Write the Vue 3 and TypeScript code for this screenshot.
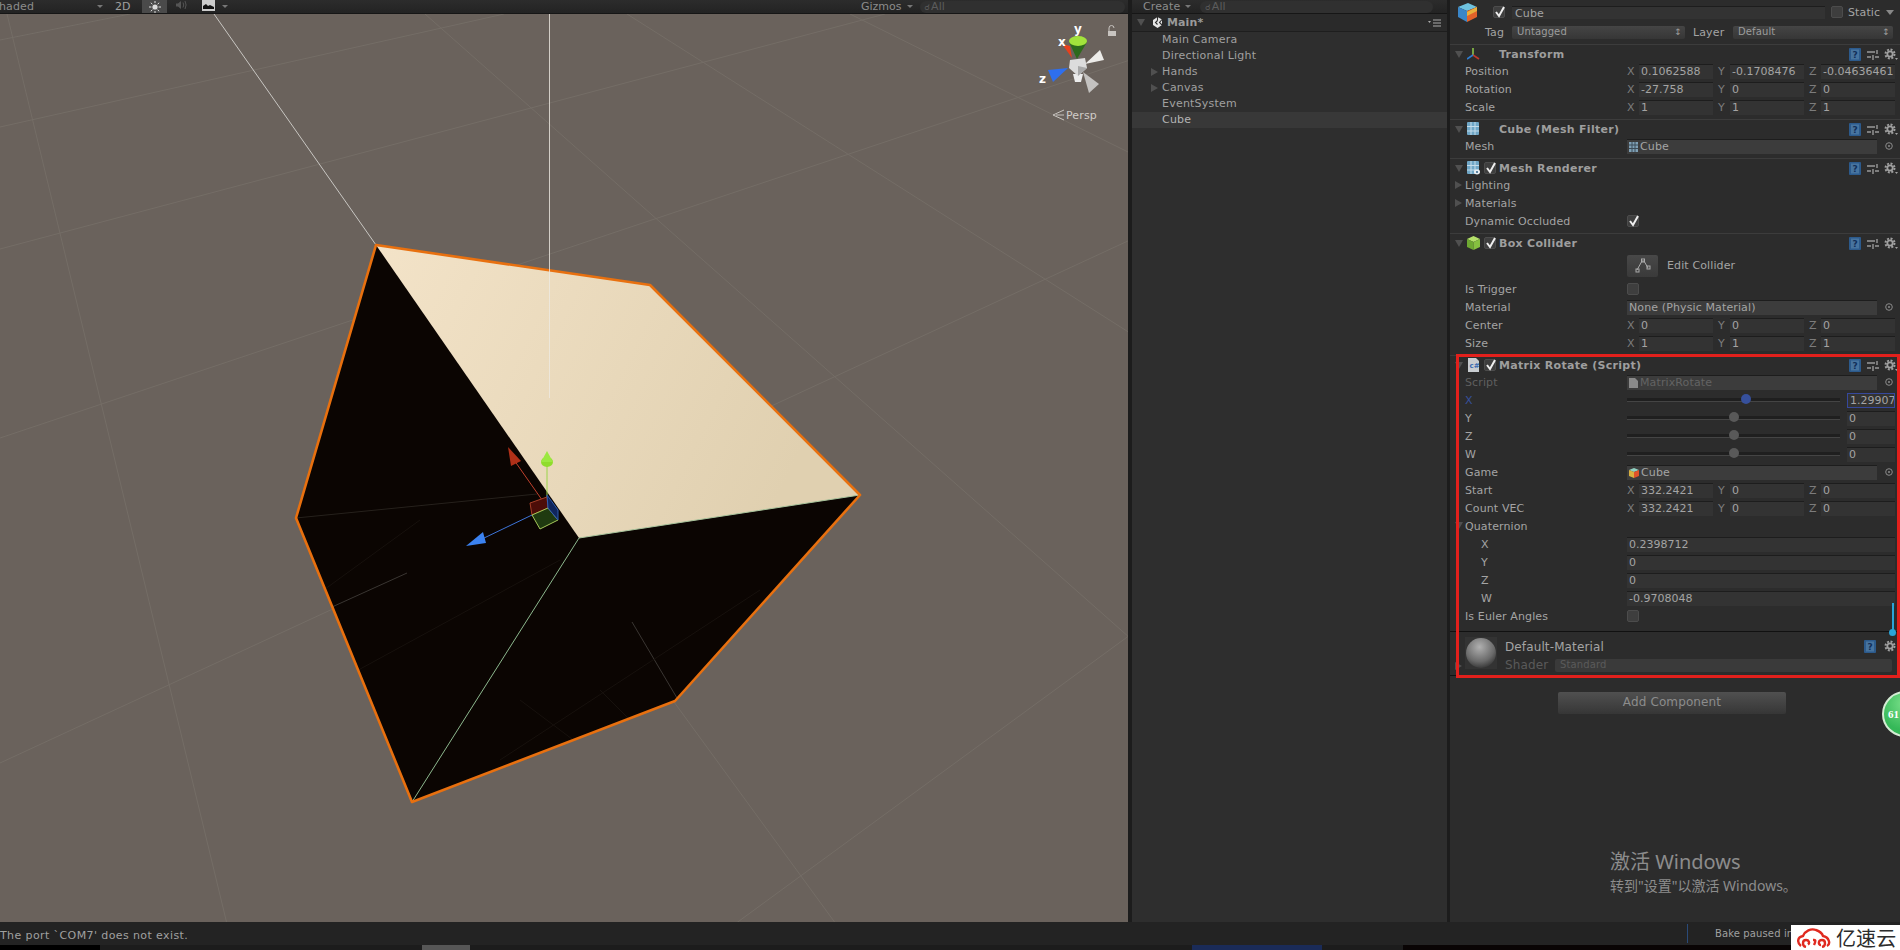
<script setup lang="ts">
type Row =
  | { kind: "vec"; label: string; vals: string[] }
  | { kind: "obj"; label: string; value: string; icon?: string; dim?: boolean }
  | { kind: "check"; label: string; checked?: boolean }
  | { kind: "fold"; label: string; open?: boolean }
  | { kind: "slider"; label: string; value: string; pos: number; active?: boolean }
  | { kind: "float"; label: string; value: string }
  | { kind: "button"; label: string };

type Section = { title: string; icon: string; check?: boolean; rows: Row[]; last?: boolean };

const sections: Section[] = [
  {
    title: "Transform",
    icon: "axes",
    rows: [
      { kind: "vec", label: "Position", vals: ["0.1062588", "-0.1708476", "-0.04636461"] },
      { kind: "vec", label: "Rotation", vals: ["-27.758", "0", "0"] },
      { kind: "vec", label: "Scale", vals: ["1", "1", "1"] },
    ],
  },
  {
    title: "Cube (Mesh Filter)",
    icon: "mesh",
    rows: [{ kind: "obj", label: "Mesh", value: "Cube", icon: "mesh" }],
  },
  {
    title: "Mesh Renderer",
    icon: "renderer",
    check: true,
    rows: [
      { kind: "fold", label: "Lighting" },
      { kind: "fold", label: "Materials" },
      { kind: "check", label: "Dynamic Occluded", checked: true },
    ],
  },
  {
    title: "Box Collider",
    icon: "box",
    check: true,
    rows: [
      { kind: "button", label: "Edit Collider" },
      { kind: "check", label: "Is Trigger" },
      { kind: "obj", label: "Material", value: "None (Physic Material)" },
      { kind: "vec", label: "Center", vals: ["0", "0", "0"] },
      { kind: "vec", label: "Size", vals: ["1", "1", "1"] },
    ],
  },
  {
    title: "Matrix Rotate (Script)",
    icon: "script",
    check: true,
    last: true,
    rows: [
      { kind: "obj", label: "Script", value: "MatrixRotate", icon: "script", dim: true },
      { kind: "slider", label: "X", value: "1.29907", pos: 56, active: true },
      { kind: "slider", label: "Y", value: "0", pos: 50 },
      { kind: "slider", label: "Z", value: "0", pos: 50 },
      { kind: "slider", label: "W", value: "0", pos: 50 },
      { kind: "obj", label: "Game", value: "Cube", icon: "cube" },
      { kind: "vec", label: "Start", vals: ["332.2421", "0", "0"] },
      { kind: "vec", label: "Count VEC", vals: ["332.2421", "0", "0"] },
      { kind: "fold", label: "Quaternion", open: true },
      { kind: "float", label: "X", value: "0.2398712" },
      { kind: "float", label: "Y", value: "0" },
      { kind: "float", label: "Z", value: "0" },
      { kind: "float", label: "W", value: "-0.9708048" },
      { kind: "check", label: "Is Euler Angles" },
    ],
  },
];

const axes = ["X", "Y", "Z"];

const hierarchy = [
  { name: "Main Camera" },
  { name: "Directional Light" },
  { name: "Hands", fold: true },
  { name: "Canvas", fold: true },
  { name: "EventSystem" },
  { name: "Cube", selected: true },
];

// faint floor grid of the scene view
const grid = [
  [0, 40, 130, 14],
  [0, 127, 504, 14],
  [0, 249, 885, 14],
  [0, 438, 1130, 60],
  [0, 763, 1130, 240],
  [735, 924, 1130, 635],
  [425, 14, 1130, 638],
  [627, 14, 1130, 333],
  [7, 14, 227, 924],
  [674, 702, 836, 924],
  [850, 14, 1130, 153],
];
</script>

<template>
  <div class="editor">
    <div class="main">
      <div class="scene-col">
        <div class="toolbar">
          <span class="shaded">haded</span>
          <span class="caret caret-shaded"></span>
          <span class="tool-2d">2D</span>
          <span class="tool-sun">
            <svg width="14" height="12" viewBox="0 0 14 12">
              <circle cx="7" cy="6" r="2.6" fill="#ddd" />
              <path d="M7 0v2M7 10v2M1 6h2.4M10.6 6H13M2.8 1.8l1.6 1.4M9.6 8.8l1.6 1.4M11.2 1.8L9.6 3.2M4.4 8.8l-1.6 1.4" stroke="#ddd" stroke-width="1" />
            </svg>
          </span>
          <span class="tool-audio">
            <svg width="12" height="12" viewBox="0 0 12 12">
              <path d="M1 4.5h2L6 2v8L3 7.5H1z" fill="#555" />
              <path d="M8 3.5q1.500 2.500 0 5M10 2q2.200 4 0 8" fill="none" stroke="#555" />
            </svg>
          </span>
          <span class="tool-image">
            <svg width="13" height="11" viewBox="0 0 13 11">
              <rect width="13" height="11" fill="#ccc" />
              <path d="M1 9V6l3-2 2 2 2-1 4 2v2z" fill="#111" />
            </svg>
          </span>
          <span class="caret caret-image"></span>
          <span class="gizmos">Gizmos</span>
          <span class="caret caret-gizmos"></span>
          <span class="search search-scene"><span class="search-mark">&#9740;</span>All</span>
        </div>
        <div class="scene">
          <svg class="scene-svg" viewBox="0 14 1128 908" width="1128" height="908">
            <defs>
              <linearGradient id="topFace" x1="0" y1="0" x2="1" y2="0.3">
                <stop offset="0" stop-color="#f3e3c8" />
                <stop offset="1" stop-color="#e0d0b0" />
              </linearGradient>
              <clipPath id="cubeClip">
                <polygon points="376,245 650,285 860,495 675,701 412,802 296,518" />
              </clipPath>
            </defs>
            <line v-for="(g, i) in grid" :key="i" :x1="g[0]" :y1="g[1]" :x2="g[2]" :y2="g[3]" stroke="#746d66" stroke-width="1" />

            <line x1="214" y1="14" x2="376" y2="245" stroke="#c8c6c2" stroke-width="1" />

            <!-- the selected cube -->
            <polygon points="376,245 650,285 860,495 675,701 412,802 296,518" fill="#0b0502" />
            <polygon points="376,245 650,285 860,495 579,538" fill="url(#topFace)" />
            <g clip-path="url(#cubeClip)">
              <path d="M296,518 L537,494" stroke="#26211c" stroke-width="1" fill="none" />
              <path d="M332,607 L407,573 M632,622 L677,698" stroke="#3a3632" stroke-width="1" fill="none" />
              <path d="M310,600 L420,520 M340,680 L560,560 M500,760 L760,590 M520,700 L600,760 M600,690 L660,750" stroke="#17110d" stroke-width="1" fill="none" />
            </g>
            <line x1="579" y1="538" x2="412" y2="802" stroke="#8db88e" stroke-width="1" />
            <line x1="579" y1="538" x2="860" y2="495" stroke="#a8c49c" stroke-width="1" />
            <polygon points="376,245 650,285 860,495 675,701 412,802 296,518" fill="none" stroke="#e8700f" stroke-width="2.600" stroke-linejoin="round" />

            <line x1="549.5" y1="14" x2="549.5" y2="398" stroke="#eeeae2" stroke-width="1" opacity="0.8" />

            <!-- move gizmo -->
            <line x1="547" y1="507" x2="514" y2="460" stroke="#c0402c" stroke-width="1" />
            <line x1="547" y1="497" x2="547" y2="465" stroke="#9ad44a" stroke-width="1" />
            <line x1="532" y1="515" x2="482" y2="539" stroke="#3d74d8" stroke-width="1" />
            <polygon points="508,447 521,461 511,466" fill="#b03018" />
            <ellipse cx="547" cy="462" rx="6" ry="5" fill="#8fdc2c" />
            <polygon points="547,451 541,462 553,462" fill="#9ce840" />
            <polygon points="466,546 483,532 486,543" fill="#3b82f0" />
            <polygon points="530,503 547,497 548,508 532,515" fill="#4c0d08" stroke="#a84028" stroke-width="1" />
            <polygon points="532,515 548,508 558,520 540,529" fill="#1f3a10" stroke="#a6c85a" stroke-width="1" />
            <polygon points="547,495 558,510 558,520 548,508" fill="#10265c" stroke="#2d5cb0" stroke-width="1" />

            <!-- orientation gizmo, top right -->
            <polygon points="1085,64 1100,50 1104,60" fill="#ecebe8" />
            <polygon points="1083,72 1099,84 1089,93" fill="#c4c2c0" />
            <polygon points="1073,74 1083,74 1081,82 1075,82" fill="#ececec" />
            <polygon points="1070,60 1085,58 1087,68 1078,76 1069,68" fill="#dcdcdc" />
            <polygon points="1078,66 1087,68 1078,76" fill="#a8a8a8" />
            <polygon points="1072,58 1062,44 1070,46" fill="#e8401c" />
            <polygon points="1077,59 1069,42 1087,42" fill="#2d6a1c" />
            <ellipse cx="1078" cy="41" rx="9" ry="5" fill="#a2e33c" />
            <polygon points="1068,68 1048,70 1053,82" fill="#2e6fee" />
            <text x="1074" y="33" class="giz">y</text>
            <text x="1058" y="46" class="giz">x</text>
            <text x="1039" y="83" class="giz">z</text>
            <path d="M1109,31 v-3 a2.500,2.500 0 0 1 5,0" fill="none" stroke="#c8c4c0" stroke-width="1" />
            <rect x="1108" y="31" width="8" height="5" fill="#c8c4c0" />
            <path d="M1064,110 L1053,115 L1064,120 M1064,115 L1056,115" fill="none" stroke="#c8c4c0" stroke-width="1" />
            <text x="1066" y="119" class="persp">Persp</text>
          </svg>
        </div>
      </div>

      <div class="hier">
        <div class="toolbar toolbar-hier">
          <span class="create">Create</span>
          <span class="caret caret-create"></span>
          <span class="search search-hier"><span class="search-mark">&#9740;</span>All</span>
        </div>
        <div class="hier-head">
          <span class="tri tri-open tri-head"></span>
          <svg class="unity-logo" width="11" height="11" viewBox="0 0 11 11">
            <path d="M5.500 0L10 2.500v5.500L5.500 11 1 8V3z" fill="#e6e6e6" />
            <path d="M5.500 3.500L3.500 5.500l2 2M5.500 0v3.500M10 8L7.500 5.500 10 2.500" stroke="#2e2e2e" stroke-width="1.100" fill="none" />
          </svg>
          <span class="hier-title">Main*</span>
          <svg class="hier-menu" width="14" height="8" viewBox="0 0 14 8">
            <path d="M0 2h3L1.500 4z" fill="#aaa" />
            <path d="M5 1h8M5 4h8M5 7h8" stroke="#aaa" />
          </svg>
        </div>
        <div v-for="item in hierarchy" :key="item.name" class="hier-row" :class="{ selected: item.selected }">
          <span v-if="item.fold" class="tri tri-closed tri-hier"></span>
          {{ item.name }}
        </div>
      </div>

      <div class="insp">
        <div class="go-head">
          <div class="go-row">
            <svg class="go-icon" width="21" height="21" viewBox="0 0 21 21">
              <polygon points="1,5 11,1 20,5 10,9" fill="#6fc3df" />
              <polygon points="1,5 10,9 10,20 1,15" fill="#3a86c8" />
              <polygon points="10,9 20,5 20,15 10,20" fill="#e2622a" />
              <polygon points="10,10 20,5 20,9 10,14" fill="#e8b03c" />
            </svg>
            <span class="check go-check"><svg width="12" height="12" viewBox="0 0 12 12"><path d="M2 6l3 4 5-9" fill="none" stroke="#eee" stroke-width="2" /></svg></span>
            <span class="go-name">Cube</span>
            <span class="check static-check"></span>
            <span class="static-label">Static</span>
            <span class="static-arrow"></span>
          </div>
          <div class="go-row go-row2">
            <span class="tag-label">Tag</span>
            <span class="select tag-select">Untagged<span class="updown">&#8597;</span></span>
            <span class="layer-label">Layer</span>
            <span class="select layer-select">Default<span class="updown">&#8597;</span></span>
          </div>
        </div>

        <div v-for="sec in sections" :key="sec.title" class="sec" :class="{ last: sec.last }">
          <div class="sec-head">
            <span class="tri tri-open tri-sec"></span>
            <svg v-if="sec.icon === 'axes'" class="sec-icon" width="13" height="14" viewBox="0 0 13 14">
              <path d="M6 8V1" stroke="#8bc34a" stroke-width="1.600" />
              <path d="M6 8l6 4" stroke="#c0392b" stroke-width="1.600" />
              <path d="M6 8l-6 4" stroke="#2e7dd1" stroke-width="1.600" />
            </svg>
            <svg v-else-if="sec.icon === 'mesh' || sec.icon === 'renderer'" class="sec-icon" width="13" height="14" viewBox="0 0 13 14">
              <rect width="12" height="13" rx="1" fill="#6fa6c6" />
              <path d="M4 0v13M8 0v13M0 4.500h12M0 9h12" stroke="#c4dcea" />
              <ellipse v-if="sec.icon === 'renderer'" cx="10" cy="11" rx="3" ry="2.400" fill="#e8eef2" />
              <circle v-if="sec.icon === 'renderer'" cx="10" cy="11" r="1.100" fill="#3a6a8c" />
            </svg>
            <svg v-else-if="sec.icon === 'box'" class="sec-icon" width="13" height="14" viewBox="0 0 13 14">
              <polygon points="0,3 6.500,0 13,3 6.500,6" fill="#b4e06a" />
              <polygon points="0,3 6.500,6 6.500,14 0,11" fill="#6ea832" />
              <polygon points="6.500,6 13,3 13,11 6.500,14" fill="#86c040" />
            </svg>
            <svg v-else class="sec-icon" width="13" height="14" viewBox="0 0 13 14">
              <path d="M1 0h8l3 3v11H1z" fill="#c8ccd0" />
              <text x="2.500" y="10" class="script-cs">c#</text>
            </svg>
            <span v-if="sec.check" class="check head-check"><svg width="12" height="12" viewBox="0 0 12 12"><path d="M2 6l3 4 5-9" fill="none" stroke="#eee" stroke-width="2" /></svg></span>
            <span class="sec-title">{{ sec.title }}</span>
            <svg class="book" width="12" height="13" viewBox="0 0 12 13">
              <rect width="12" height="13" rx="1" fill="#2c5a8c" />
              <rect x="2" y="1.500" width="8" height="10" fill="#47749f" />
              <text x="3.500" y="10" class="book-q">?</text>
            </svg>
            <svg class="presets" width="12" height="12" viewBox="0 0 12 12">
              <path d="M0 3h8M10 1v4M0 8h4M6 6v5M8 8h4" stroke="#999" stroke-width="1.400" />
            </svg>
            <svg class="gear" width="14" height="13" viewBox="0 0 14 13">
              <circle cx="6" cy="6" r="4.500" fill="none" stroke="#a0a0a0" stroke-width="2" stroke-dasharray="2 1.530" />
              <circle cx="6" cy="6" r="2.700" fill="none" stroke="#a0a0a0" stroke-width="1.800" />
              <path d="M11 10h3l-1.500 2z" fill="#a0a0a0" />
            </svg>
          </div>

          <div v-for="row in sec.rows" :key="row.label" class="row" :class="{ 'row-button': row.kind === 'button', 'row-dim': row.kind === 'obj' && row.dim }">
            <template v-if="row.kind === 'button'">
              <span class="edit-btn">
                <svg width="16" height="15" viewBox="0 0 16 15">
                  <path d="M2 12L7 3h2l4 7" fill="none" stroke="#aaa" />
                  <rect x="1" y="11" width="3" height="3" fill="none" stroke="#aaa" />
                  <rect x="6.500" y="1" width="3" height="3" fill="none" stroke="#aaa" />
                  <rect x="12" y="8" width="3" height="3" fill="none" stroke="#aaa" />
                </svg>
              </span>
              <span class="edit-label">{{ row.label }}</span>
            </template>
            <template v-else>
              <span class="row-label" :class="{ indent: row.kind === 'float', blue: row.kind === 'slider' && row.active }">
                <span v-if="row.kind === 'fold'" class="tri tri-row" :class="row.open ? 'tri-open' : 'tri-closed'"></span>
                {{ row.label }}
              </span>
              <div v-if="row.kind === 'vec'" class="vec">
                <span v-for="(v, i) in row.vals" :key="i" class="vec-cell">
                  <span class="axis">{{ axes[i] }}</span>
                  <span class="field">{{ v }}</span>
                </span>
              </div>
              <div v-else-if="row.kind === 'obj'" class="obj">
                <span class="obj-field">
                  <svg v-if="row.icon === 'mesh'" class="obj-icon" width="9" height="10" viewBox="0 0 9 10">
                    <rect width="9" height="10" fill="#7f9fb4" />
                    <path d="M3 0v10M6 0v10M0 3h9M0 6.500h9" stroke="#3c4c58" />
                  </svg>
                  <svg v-else-if="row.icon === 'script'" class="obj-icon" width="9" height="10" viewBox="0 0 9 10">
                    <path d="M0 0h6l3 3v7H0z" fill="#8a8a8a" />
                  </svg>
                  <svg v-else-if="row.icon === 'cube'" class="obj-icon" width="10" height="10" viewBox="0 0 10 10">
                    <polygon points="0,2 5,0 10,2 5,4" fill="#8fd0c0" />
                    <polygon points="0,2 5,4 5,10 0,8" fill="#d8b040" />
                    <polygon points="5,4 10,2 10,8 5,10" fill="#e0522a" />
                  </svg>
                  <span>{{ row.value }}</span>
                </span>
                <svg class="picker" width="8" height="8" viewBox="0 0 8 8">
                  <circle cx="4" cy="4" r="3.300" fill="none" stroke="#8a8a8a" />
                  <circle cx="4" cy="4" r="1" fill="#8a8a8a" />
                </svg>
              </div>
              <span v-else-if="row.kind === 'check'" class="check"><svg v-if="row.checked" width="12" height="12" viewBox="0 0 12 12"><path d="M2 6l3 4 5-9" fill="none" stroke="#eee" stroke-width="2" /></svg></span>
              <div v-else-if="row.kind === 'slider'" class="slider">
                <span class="track">
                  <span class="thumb" :class="{ on: row.active }" :style="{ left: row.pos + '%' }"></span>
                </span>
                <span class="field slider-val" :class="{ focused: row.active }">{{ row.value }}</span>
              </div>
              <span v-else-if="row.kind === 'float'" class="field field-wide">{{ row.value }}</span>
            </template>
          </div>
        </div>

        <div class="material">
          <span class="tri tri-closed tri-mat"></span>
          <span class="preview"><span class="sphere"></span></span>
          <div class="mat-body">
            <div class="mat-title">
              <span>Default-Material</span>
              <svg class="book book-mat" width="12" height="13" viewBox="0 0 12 13">
                <rect width="12" height="13" rx="1" fill="#2c5a8c" />
                <rect x="2" y="1.500" width="8" height="10" fill="#47749f" />
                <text x="3.500" y="10" class="book-q">?</text>
              </svg>
              <svg class="gear" width="14" height="13" viewBox="0 0 14 13">
                <circle cx="6" cy="6" r="4.500" fill="none" stroke="#a0a0a0" stroke-width="2" stroke-dasharray="2 1.530" />
                <circle cx="6" cy="6" r="2.700" fill="none" stroke="#a0a0a0" stroke-width="1.800" />
              </svg>
            </div>
            <div class="mat-shader">
              <span class="shader-label">Shader</span>
              <span class="shader-select">Standard</span>
            </div>
          </div>
        </div>

        <div class="add-wrap"><span class="add-btn">Add Component</span></div>

        <div class="red-box"></div>
        <div class="scroll-mark"></div>
        <div class="fps">61</div>
        <div class="activate">
          <div class="activate-1">激活 Windows</div>
          <div class="activate-2">转到"设置"以激活 Windows。</div>
        </div>
      </div>
    </div>

    <div class="status">
      <span class="status-msg">The port `COM7' does not exist.</span>
      <span class="bake">Bake paused in</span>
      <div class="logo">
        <svg width="34" height="20" viewBox="0 0 34 20">
          <path d="M4 18C0 15 0 9 6 8 8 3 14 0 19 2c3 1 6 3 7 6 6 1 8 8 4 10" fill="none" stroke="#e02a20" stroke-width="2.400" />
          <path d="M9 19c-4-1-4-7 0-7 3 0 4 3 2 4.500M17 17c3-6 0-5-1-5M25 19c4-1 4-7 0-7-4 0-4 5-1 5" fill="none" stroke="#e02a20" stroke-width="2.400" />
        </svg>
        <span class="logo-text">亿速云</span>
      </div>
    </div>
    <div class="taskbar">
      <span class="seg seg-black"></span>
      <span class="seg seg-grey"></span>
      <span class="seg seg-blue"></span>
      <span class="seg seg-dark"></span>
    </div>
  </div>
</template>

<style>
html,
body {
  margin: 0;
  background: #1f1f1f;
}
</style>

<style scoped>
.editor {
  width: 1900px;
  height: 950px;
  overflow: hidden;
  display: flex;
  flex-direction: column;
  background: #1c1c1c;
  font-family: "DejaVu Sans", sans-serif;
  font-size: 11px;
  letter-spacing: 0.12px;
  color: #a4a4a4;
}
.main {
  height: 922px;
  display: flex;
}
.scene-col {
  width: 1128px;
  display: flex;
  flex-direction: column;
}
.toolbar {
  height: 14px;
  flex: none;
  position: relative;
  background: linear-gradient(#2c2c2c, #232323);
  border-bottom: 1px solid #161616;
  box-sizing: border-box;
  overflow: hidden;
  display: flex;
  align-items: center;
  line-height: 12px;
  color: #8c8c8c;
}
.shaded {
  margin-left: -1px;
  width: 98px;
}
.caret {
  width: 0;
  height: 0;
  border: 3px solid transparent;
  border-top-color: #777;
  border-bottom: 0;
}
.tool-2d {
  margin-left: 12px;
  width: 27px;
  color: #a0a0a0;
}
.tool-sun {
  width: 25px;
  height: 14px;
  background: #4a4a4a;
  display: flex;
  align-items: center;
  justify-content: center;
}
.tool-audio {
  margin-left: 8px;
  width: 17px;
}
.tool-image {
  margin-left: 10px;
  width: 17px;
}
.caret-image {
  margin-left: 3px;
}
.gizmos {
  margin-left: 633px;
  letter-spacing: 0;
}
.caret-gizmos {
  margin-left: 5px;
}
.search {
  height: 12px;
  border-radius: 6px;
  background: #303030;
  color: #5c5c5c;
  font-size: 11px;
  padding-left: 5px;
  box-sizing: border-box;
}
.search-mark {
  font-size: 8px;
  margin-right: 1px;
}
.search-scene {
  margin-left: 7px;
  width: 205px;
}
.scene {
  flex: 1;
  background: #6a625c;
  overflow: hidden;
}
.scene-svg {
  display: block;
}
.giz {
  font: bold 12px "DejaVu Sans", sans-serif;
  fill: #fff;
}
.persp {
  font: 11px "DejaVu Sans", sans-serif;
  fill: #d0ccc8;
}

.hier {
  width: 315px;
  margin-left: 4px;
  background: #2e2e2e;
}
.toolbar-hier {
  width: 100%;
}
.create {
  margin-left: 11px;
}
.caret-create {
  margin-left: 5px;
}
.search-hier {
  margin-left: 9px;
  width: 233px;
}
.hier-head {
  height: 17px;
  display: flex;
  align-items: center;
  position: relative;
  background: #2a2a2a;
  border-bottom: 1px solid #1e1e1e;
  font-weight: bold;
  color: #9a9a9a;
}
.tri {
  display: inline-block;
  width: 0;
  height: 0;
}
.tri-open {
  border-left: 4px solid transparent;
  border-right: 4px solid transparent;
  border-top: 7px solid #505050;
}
.tri-closed {
  border-top: 4px solid transparent;
  border-bottom: 4px solid transparent;
  border-left: 7px solid #505050;
}
.tri-head {
  margin-left: 5px;
}
.unity-logo {
  margin-left: 7px;
}
.hier-title {
  margin-left: 4px;
}
.hier-menu {
  margin-left: auto;
  margin-right: 5px;
}
.hier-row {
  height: 16px;
  line-height: 16px;
  padding-left: 30px;
  position: relative;
  color: #a0a0a0;
  letter-spacing: 0.22px;
}
.hier-row.selected {
  background: #383838;
  color: #b4b4b4;
}
.tri-hier {
  position: absolute;
  left: 19px;
  top: 4px;
}

.insp {
  width: 450px;
  margin-left: 3px;
  background: #2c2c2c;
  position: relative;
  overflow: hidden;
}
.go-head {
  height: 45px;
  box-sizing: border-box;
  padding-top: 3px;
  border-bottom: 1px solid #3c3c3c;
}
.go-row {
  height: 18px;
  display: flex;
  align-items: center;
}
.go-row2 {
  margin-top: 3px;
  height: 17px;
}
.go-icon {
  margin-left: 7px;
}
.check {
  width: 12px;
  height: 12px;
  flex: none;
  display: block;
  background: #3e3e3e;
  border: 1px solid #4c4c4c;
  border-radius: 2px;
  box-sizing: border-box;
}
.check svg {
  display: block;
  margin: -1px 0 0 0;
}
.go-check {
  margin-left: 15px;
}
.go-name {
  margin-left: 7px;
  width: 313px;
  height: 13px;
  line-height: 13px;
  padding-left: 3px;
  box-sizing: border-box;
  background: #333;
  border-top: 1px solid #1d1d1d;
  flex: none;
}
.static-check {
  margin-left: 6px;
}
.static-label {
  margin-left: 5px;
}
.static-arrow {
  margin-left: 6px;
  border: 4px solid transparent;
  border-top: 5px solid #888;
  border-bottom: 0;
}
.tag-label {
  margin-left: 35px;
  width: 27px;
}
.select {
  height: 13px;
  line-height: 12px;
  font-size: 10px;
  padding-left: 5px;
  box-sizing: border-box;
  background: linear-gradient(#454545, #363636);
  border-radius: 2px;
  position: relative;
  flex: none;
  color: #9c9c9c;
}
.updown {
  position: absolute;
  right: 3px;
  top: 0;
  font-size: 9px;
}
.tag-select {
  width: 173px;
}
.layer-label {
  margin-left: 8px;
  width: 40px;
}
.layer-select {
  width: 160px;
}

.sec {
  padding-top: 2px;
  padding-bottom: 3px;
  border-bottom: 1px solid #3c3c3c;
}
.sec.last {
  padding-bottom: 6px;
  border-bottom: 1px solid #111;
}
.sec-head {
  height: 15px;
  display: flex;
  align-items: center;
  position: relative;
}
.tri-sec {
  position: absolute;
  left: 5px;
  top: 4px;
}
.sec-icon {
  position: absolute;
  left: 17px;
  top: 0;
}
.head-check {
  position: absolute;
  left: 34px;
  top: 1px;
}
.sec-title {
  margin-left: 49px;
  font-weight: bold;
  color: #9e9e9e;
  letter-spacing: 0.3px;
}
.book {
  margin-left: auto;
}
.presets {
  margin-left: 6px;
}
.gear {
  margin-left: 5px;
  margin-right: 2px;
}
.book-q {
  font: bold 9px "DejaVu Sans", sans-serif;
  fill: #12305a;
}
.script-cs {
  font: bold 7px "DejaVu Sans", sans-serif;
  fill: #3a6ab0;
}

.row {
  height: 18px;
  display: flex;
  align-items: center;
  padding-left: 15px;
  padding-right: 5px;
}
.row-button {
  height: 29px;
  padding-left: 177px;
}
.row-dim {
  color: #5f5f5f;
}
.row-dim .obj-field {
  color: #636363;
}
.row-label {
  width: 162px;
  flex: none;
  position: relative;
  white-space: nowrap;
}
.row-label.indent {
  padding-left: 16px;
  width: 146px;
}
.row-label.blue {
  color: #36509c;
}
.tri-row {
  position: absolute;
  left: -10px;
  top: 2px;
}
.vec {
  display: flex;
  gap: 5px;
}
.vec-cell {
  display: flex;
  width: 86px;
}
.axis {
  width: 12px;
  color: #7c7c7c;
  line-height: 15px;
}
.field {
  height: 15px;
  line-height: 14px;
  box-sizing: border-box;
  width: 74px;
  padding-left: 2px;
  background: #333;
  border-top: 1px solid #1d1d1d;
  overflow: hidden;
  white-space: nowrap;
  color: #a4a4a4;
  letter-spacing: 0;
}
.field-wide {
  flex: 1;
}
.obj {
  flex: 1;
  display: flex;
  align-items: center;
}
.obj-field {
  width: 250px;
  height: 15px;
  line-height: 14px;
  box-sizing: border-box;
  padding-left: 2px;
  background: #3c3c3c;
  border-top: 1px solid #1d1d1d;
  display: flex;
  align-items: center;
  gap: 2px;
  white-space: nowrap;
}
.obj-icon {
  flex: none;
}
.picker {
  margin-left: 8px;
}
.slider {
  flex: 1;
  display: flex;
  align-items: center;
}
.track {
  width: 213px;
  height: 3px;
  background: #1f1f1f;
  border-bottom: 1px solid #444;
  position: relative;
}
.thumb {
  position: absolute;
  top: -4px;
  width: 10px;
  height: 10px;
  margin-left: -5px;
  border-radius: 50%;
  background: #595959;
}
.thumb.on {
  background: #36509c;
}
.slider-val {
  margin-left: 7px;
  width: 48px;
}
.slider-val.focused {
  border: 1px solid #36489c;
}
.edit-btn {
  width: 31px;
  height: 22px;
  background: linear-gradient(#484848, #3a3a3a);
  border-radius: 2px;
  display: flex;
  align-items: center;
  justify-content: center;
}
.edit-label {
  margin-left: 9px;
}

.material {
  height: 44px;
  position: relative;
  display: flex;
  padding-left: 15px;
  box-sizing: border-box;
  border-bottom: 1px solid #111;
}
.tri-mat {
  position: absolute;
  left: 5px;
  top: 30px;
}
.preview {
  width: 32px;
  height: 32px;
  margin-top: 5px;
  flex: none;
  background: #333;
  display: flex;
  align-items: center;
  justify-content: center;
}
.sphere {
  width: 30px;
  height: 30px;
  border-radius: 50%;
  background: radial-gradient(circle at 45% 30%, #b0b0b0, #6a6a6a 55%, #1a1a1a 95%);
}
.mat-body {
  flex: 1;
  margin-left: 8px;
}
.mat-title {
  height: 23px;
  margin-top: 3px;
  font-size: 12px;
  display: flex;
  align-items: center;
}
.book-mat {
  margin-right: 3px;
}
.mat-shader {
  display: flex;
  align-items: center;
  color: #5a5a5a;
}
.shader-label {
  width: 50px;
  font-size: 12px;
}
.shader-select {
  width: 337px;
  height: 13px;
  line-height: 12px;
  font-size: 10px;
  padding-left: 5px;
  box-sizing: border-box;
  background: #3a3a3a;
  border-radius: 2px;
}
.add-wrap {
  margin-top: 16px;
  padding-left: 108px;
}
.add-btn {
  display: block;
  width: 228px;
  height: 22px;
  line-height: 21px;
  text-align: center;
  font-size: 12px;
  color: #8c8c8c;
  background: linear-gradient(#505050, #363636);
  border-radius: 2px;
}

.red-box {
  position: absolute;
  left: 6px;
  top: 354px;
  width: 444px;
  height: 324px;
  box-sizing: border-box;
  border: 3px solid #e2201c;
  pointer-events: none;
}
.scroll-mark {
  position: absolute;
  left: 442px;
  top: 603px;
  width: 2px;
  height: 28px;
  background: #2aa4d8;
}
.scroll-mark::after {
  content: "";
  position: absolute;
  left: -3px;
  bottom: -5px;
  width: 7px;
  height: 7px;
  border-radius: 50%;
  background: #2aa4d8;
}
.fps {
  position: absolute;
  left: 432px;
  top: 691px;
  width: 46px;
  height: 46px;
  box-sizing: border-box;
  border: 2px solid #d4ecd4;
  border-radius: 50%;
  background: radial-gradient(circle at 50% 25%, #7ae08a, #35b858 70%);
  color: #fff;
  font: bold 11px "Liberation Serif", serif;
  line-height: 42px;
  padding-left: 4px;
}
.activate {
  position: absolute;
  left: 160px;
  top: 848px;
  color: #8c8c8c;
  font-family: "Noto Sans", "Noto Sans CJK SC", sans-serif;
  letter-spacing: 0;
}
.activate-1 {
  font-size: 20px;
  line-height: 28px;
}
.activate-2 {
  font-size: 14px;
  line-height: 20px;
}

.status {
  height: 23px;
  position: relative;
  background: #232323;
  display: flex;
  align-items: center;
  color: #a0a0a0;
  line-height: 23px;
  white-space: nowrap;
}
.status-msg {
  padding-top: 3px;
  letter-spacing: 0.4px;
}
.bake {
  position: absolute;
  left: 1687px;
  top: 2px;
  height: 19px;
  line-height: 19px;
  border-left: 1px solid #2a4a78;
  padding-left: 27px;
  box-sizing: border-box;
  font-size: 10px;
}
.logo {
  position: absolute;
  left: 1791px;
  top: 3px;
  width: 109px;
  height: 25px;
  background: #fff;
  display: flex;
  align-items: center;
  padding-left: 6px;
  box-sizing: border-box;
  z-index: 2;
}
.logo-text {
  margin-left: 5px;
  font: 20px "Noto Sans CJK SC", sans-serif;
  color: #2c2c2c;
  line-height: 25px;
}
.taskbar {
  height: 5px;
  display: flex;
  background: #1c1c1c;
}
.seg {
  display: block;
  height: 5px;
}
.seg-black {
  width: 100px;
  background: #000;
}
.seg-grey {
  width: 48px;
  margin-left: 322px;
  background: #565656;
}
.seg-blue {
  width: 130px;
  margin-left: 722px;
  background: #1a2b58;
}
.seg-dark {
  width: 388px;
  margin-left: 81px;
  background: #090404;
}
</style>
